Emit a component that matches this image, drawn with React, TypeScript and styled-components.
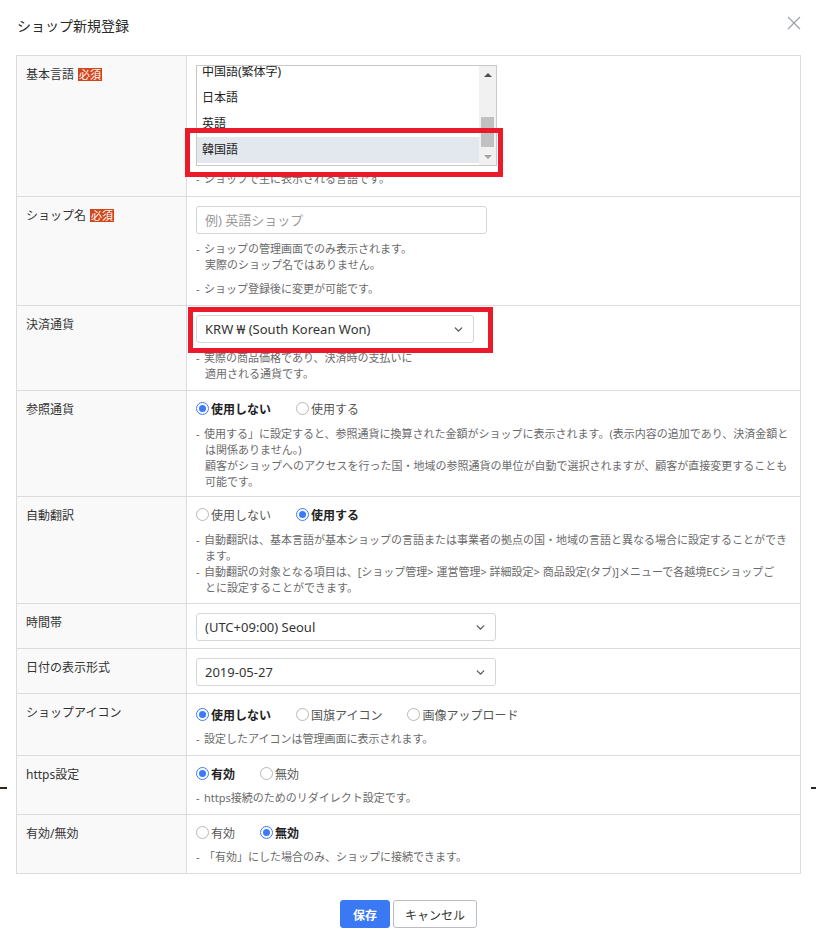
import React from 'react';
import styled, { createGlobalStyle } from 'styled-components';
import { ChevronDown } from 'lucide-react';

const GlobalStyle = createGlobalStyle`
  * {
    box-sizing: border-box;
  }

  body {
    margin: 0;
    background: #fff;
    color: #333;
    font-family: "Noto Sans", "Noto Sans CJK JP", sans-serif;
  }
`;

const languages = ['中国語(繁体字)', '日本語', '英語', '韓国語'];

export default function App(): JSX.Element {
  return (
    <>
      <GlobalStyle />
      <Page>
        <Header>
          <Title>ショップ新規登録</Title>
          <CloseButton type="button" aria-label="close">
            <svg width="14" height="14" viewBox="0 0 14 14">
              <path d="M1 1L13 13M13 1L1 13" stroke="#9a9ea6" strokeWidth="1.1" fill="none" />
            </svg>
          </CloseButton>
        </Header>

        <Table>
          <Row>
            <Label>
              基本言語 <Required>必須</Required>
            </Label>
            <Content $padBottom={9}>
              <ListBox>
                <ListViewport>
                  <ListItems>
                    {languages.map((lang) => (
                      <ListItem key={lang} $selected={lang === '韓国語'}>
                        {lang}
                      </ListItem>
                    ))}
                  </ListItems>
                </ListViewport>
                <ScrollBar>
                  <ScrollArrow $dir="up" />
                  <ScrollTrack>
                    <ScrollThumb />
                  </ScrollTrack>
                  <ScrollArrow $dir="down" />
                </ScrollBar>
              </ListBox>
              <Help $space={5}>
                <HelpItem>
                  <Dash>-</Dash>ショップで主に表示される言語です。
                </HelpItem>
              </Help>
              <Highlight $left={-2} $top={72} $width={318} $height={49} />
            </Content>
          </Row>

          <Row>
            <Label>
              ショップ名 <Required>必須</Required>
            </Label>
            <Content>
              <TextInput placeholder="例) 英語ショップ" />
              <Help>
                <HelpItem>
                  <Dash>-</Dash>ショップの管理画面でのみ表示されます。
                  <br />
                  実際のショップ名ではありません。
                </HelpItem>
                <HelpItem $gap>
                  <Dash>-</Dash>ショップ登録後に変更が可能です。
                </HelpItem>
              </Help>
            </Content>
          </Row>

          <Row>
            <Label>決済通貨</Label>
            <Content>
              <SelectBox $width={278}>
                <span>KRW ₩ (South Korean Won)</span>
                <ChevronDown size={13} strokeWidth={2.4} color="#555" />
              </SelectBox>
              <Help>
                <HelpItem>
                  <Dash>-</Dash>実際の商品価格であり、決済時の支払いに
                  <br />
                  適用される通貨です。
                </HelpItem>
              </Help>
              <Highlight $left={1} $top={1} $width={305} $height={46} />
            </Content>
          </Row>

          <Row>
            <Label>参照通貨</Label>
            <Content $padBottom={6}>
              <RadioGroup>
                <Radio checked>使用しない</Radio>
                <Radio>使用する</Radio>
              </RadioGroup>
              <Help $space={9}>
                <HelpItem>
                  <Dash>-</Dash>使用する」に設定すると、参照通貨に換算された金額がショップに表示されます。(表示内容の追加であり、決済金額と
                  <br />
                  は関係ありません。)
                  <br />
                  顧客がショップへのアクセスを行った国・地域の参照通貨の単位が自動で選択されますが、顧客が直接変更することも
                  <br />
                  可能です。
                </HelpItem>
              </Help>
            </Content>
          </Row>

          <Row>
            <Label>自動翻訳</Label>
            <Content $padBottom={7}>
              <RadioGroup>
                <Radio>使用しない</Radio>
                <Radio checked>使用する</Radio>
              </RadioGroup>
              <Help $space={9}>
                <HelpItem>
                  <Dash>-</Dash>自動翻訳は、基本言語が基本ショップの言語または事業者の拠点の国・地域の言語と異なる場合に設定することができ
                  <br />
                  ます。
                </HelpItem>
                <HelpItem>
                  <Dash>-</Dash>自動翻訳の対象となる項目は、[ショップ管理&gt; 運営管理&gt; 詳細設定&gt; 商品設定(タブ)]メニューで各越境ECショップご
                  <br />
                  とに設定することができます。
                </HelpItem>
              </Help>
            </Content>
          </Row>

          <Row>
            <Label>時間帯</Label>
            <Content $padBottom={7}>
              <SelectBox $width={300}>
                <span>(UTC+09:00) Seoul</span>
                <ChevronDown size={13} strokeWidth={2.4} color="#555" />
              </SelectBox>
            </Content>
          </Row>

          <Row>
            <Label>日付の表示形式</Label>
            <Content $padBottom={7}>
              <SelectBox $width={300}>
                <span>2019-05-27</span>
                <ChevronDown size={13} strokeWidth={2.4} color="#555" />
              </SelectBox>
            </Content>
          </Row>

          <Row>
            <Label>ショップアイコン</Label>
            <Content $padTop={12}>
              <RadioGroup>
                <Radio checked>使用しない</Radio>
                <Radio>国旗アイコン</Radio>
                <Radio>画像アップロード</Radio>
              </RadioGroup>
              <Help $space={8}>
                <HelpItem>
                  <Dash>-</Dash>設定したアイコンは管理画面に表示されます。
                </HelpItem>
              </Help>
            </Content>
          </Row>

          <Row>
            <Label>https設定</Label>
            <Content>
              <RadioGroup>
                <Radio checked>有効</Radio>
                <Radio>無効</Radio>
              </RadioGroup>
              <Help $space={8}>
                <HelpItem>
                  <Dash>-</Dash>https接続のためのリダイレクト設定です。
                </HelpItem>
              </Help>
            </Content>
          </Row>

          <Row>
            <Label>有効/無効</Label>
            <Content>
              <RadioGroup>
                <Radio>有効</Radio>
                <Radio checked>無効</Radio>
              </RadioGroup>
              <Help $space={8}>
                <HelpItem>
                  <Dash>-</Dash>「有効」にした場合のみ、ショップに接続できます。
                </HelpItem>
              </Help>
            </Content>
          </Row>
        </Table>

        <Footer>
          <Button $primary type="button">保存</Button>
          <Button type="button">キャンセル</Button>
        </Footer>

        <EdgeMark $side="left" />
        <EdgeMark $side="right" />
      </Page>
    </>
  );
}

function Radio({ checked, children }: { checked?: boolean; children: React.ReactNode }) {
  return (
    <RadioLabel $checked={checked}>
      <RadioCircle $checked={checked} />
      {children}
    </RadioLabel>
  );
}

const Page = styled.div`
  width: 816px;
  min-height: 946px;
  padding: 0 15px 0 16px;
  position: relative;
`;

const Header = styled.div`
  height: 50px;
  margin-bottom: 5px;
  display: flex;
  align-items: center;
  justify-content: space-between;
  padding-left: 1px;
`;

const Title = styled.h1`
  margin: 0;
  font-family: "Noto Sans CJK JP", sans-serif;
  font-size: 14px;
  font-weight: 400;
  color: #2a2a2a;
`;

const CloseButton = styled.button`
  border: 0;
  background: none;
  padding: 0;
  width: 14px;
  height: 14px;
  margin-top: -4px;
  cursor: pointer;
  display: flex;
`;

const Table = styled.div`
  border: 1px solid #dcdcdc;
  border-bottom: 0;
`;

const Row = styled.div`
  display: grid;
  grid-template-columns: 170px 1fr;
  border-bottom: 1px solid #dcdcdc;
`;

const Label = styled.div`
  background: #f9f9f9;
  border-right: 1px solid #dcdcdc;
  padding: 10px 9px;
  font-size: 12px;
  line-height: 17px;
  color: #333;
  display: flex;
  align-items: flex-start;
  gap: 4px;
`;

const Required = styled.span`
  display: inline-block;
  margin-top: 2px;
  padding: 0 1px;
  height: 13px;
  background: #d2461c;
  color: #fff;
  font-size: 11px;
  line-height: 13px;
  font-family: "Noto Sans CJK JP", sans-serif;
`;

const Content = styled.div<{ $padTop?: number; $padBottom?: number }>`
  position: relative;
  padding: ${(p) => p.$padTop ?? 9}px 10px ${(p) => p.$padBottom ?? 8}px 9px;
  font-size: 12px;
  color: #333;
`;

const ListBox = styled.div`
  width: 301px;
  height: 101px;
  border: 1px solid #c9c9c9;
  display: flex;
  background: #fff;
`;

const ListViewport = styled.div`
  flex: 1;
  overflow: hidden;
`;

const ListItems = styled.div`
  margin-top: -7px;
`;

const ListItem = styled.div<{ $selected?: boolean }>`
  height: 26px;
  line-height: 25px;
  padding-left: 5px;
  font-size: 12px;
  color: #222;
  background: ${(p) => (p.$selected ? '#e3e7ee' : 'transparent')};
`;

const ScrollBar = styled.div`
  width: 17px;
  background: #f1f1f1;
  display: flex;
  flex-direction: column;
  align-items: center;
`;

const ScrollArrow = styled.div<{ $dir: 'up' | 'down' }>`
  height: 17px;
  width: 17px;
  display: flex;
  align-items: center;
  justify-content: center;

  &::after {
    content: '';
    border-left: 4px solid transparent;
    border-right: 4px solid transparent;
    ${(p) =>
      p.$dir === 'up'
        ? 'border-bottom: 4px solid #505050;'
        : 'border-top: 4px solid #a3a3a3;'}
  }
`;

const ScrollTrack = styled.div`
  flex: 1;
  width: 100%;
  display: flex;
  flex-direction: column;
  justify-content: flex-end;
  align-items: center;
  padding-bottom: 1px;
`;

const ScrollThumb = styled.div`
  width: 13px;
  height: 30px;
  background: #c1c1c1;
`;

const Help = styled.div<{ $space?: number }>`
  margin-top: ${(p) => p.$space ?? 7}px;
  color: #6b6b6b;
  font-size: 11px;
  line-height: 16px;
  white-space: nowrap;
`;

const HelpItem = styled.div<{ $gap?: boolean }>`
  padding-left: 9px;
  text-indent: -9px;
  margin-top: ${(p) => (p.$gap ? 8 : 0)}px;
`;

const Dash = styled.span`
  display: inline-block;
  width: 8px;
  text-indent: 0;
`;

const TextInput = styled.input`
  display: block;
  width: 291px;
  height: 28px;
  border: 1px solid #d6d6d6;
  border-radius: 3px;
  padding: 0 8px;
  font-family: "Noto Sans", "Noto Sans CJK JP", sans-serif;
  font-size: 13px;
  color: #333;
  outline: none;

  &::placeholder {
    color: #9b9b9b;
  }
`;

const SelectBox = styled.div<{ $width: number }>`
  width: ${(p) => p.$width}px;
  height: 28px;
  border: 1px solid #d6d6d6;
  border-radius: 3px;
  padding: 0 8px 0 8px;
  display: flex;
  align-items: center;
  justify-content: space-between;
  font-size: 13px;
  color: #333;
  background: #fff;
`;

const RadioGroup = styled.div`
  display: flex;
  align-items: center;
  gap: 25px;
  height: 17px;
`;

const RadioLabel = styled.label<{ $checked?: boolean }>`
  display: inline-flex;
  align-items: center;
  gap: 2px;
  font-family: "Noto Sans CJK JP", sans-serif;
  font-size: 12px;
  line-height: 17px;
  font-weight: ${(p) => (p.$checked ? 700 : 400)};
  color: ${(p) => (p.$checked ? '#222' : '#555')};
  cursor: pointer;
`;

const RadioCircle = styled.span<{ $checked?: boolean }>`
  width: 13px;
  height: 13px;
  border-radius: 50%;
  border: 1px solid ${(p) => (p.$checked ? '#3b7cf6' : '#b8b8b8')};
  background: #fff;
  display: inline-flex;
  align-items: center;
  justify-content: center;

  &::after {
    content: '';
    width: 7px;
    height: 7px;
    border-radius: 50%;
    background: ${(p) => (p.$checked ? '#3b7cf6' : 'transparent')};
  }
`;

const Highlight = styled.div<{ $left: number; $top: number; $width: number; $height: number }>`
  position: absolute;
  left: ${(p) => p.$left}px;
  top: ${(p) => p.$top}px;
  width: ${(p) => p.$width}px;
  height: ${(p) => p.$height}px;
  border: 5px solid #ea1a2a;
  pointer-events: none;
`;

const Footer = styled.div`
  display: flex;
  justify-content: center;
  gap: 3px;
  margin-top: 26px;
`;

const Button = styled.button<{ $primary?: boolean }>`
  height: 28px;
  padding: 0 ${(p) => (p.$primary ? 12 : 11)}px;
  border-radius: 3px;
  border: 1px solid ${(p) => (p.$primary ? '#3b78f4' : '#b9bcc6')};
  background: ${(p) => (p.$primary ? '#3b78f4' : '#fff')};
  color: ${(p) => (p.$primary ? '#fff' : '#333')};
  font-family: "Noto Sans CJK JP", sans-serif;
  font-size: 12px;
  font-weight: ${(p) => (p.$primary ? 700 : 400)};
  cursor: pointer;
`;

const EdgeMark = styled.div<{ $side: 'left' | 'right' }>`
  position: absolute;
  top: 787px;
  ${(p) => (p.$side === 'left' ? 'left: 0; width: 7px;' : 'right: 0; width: 5px;')}
  height: 2px;
  background: #2e261c;
`;
